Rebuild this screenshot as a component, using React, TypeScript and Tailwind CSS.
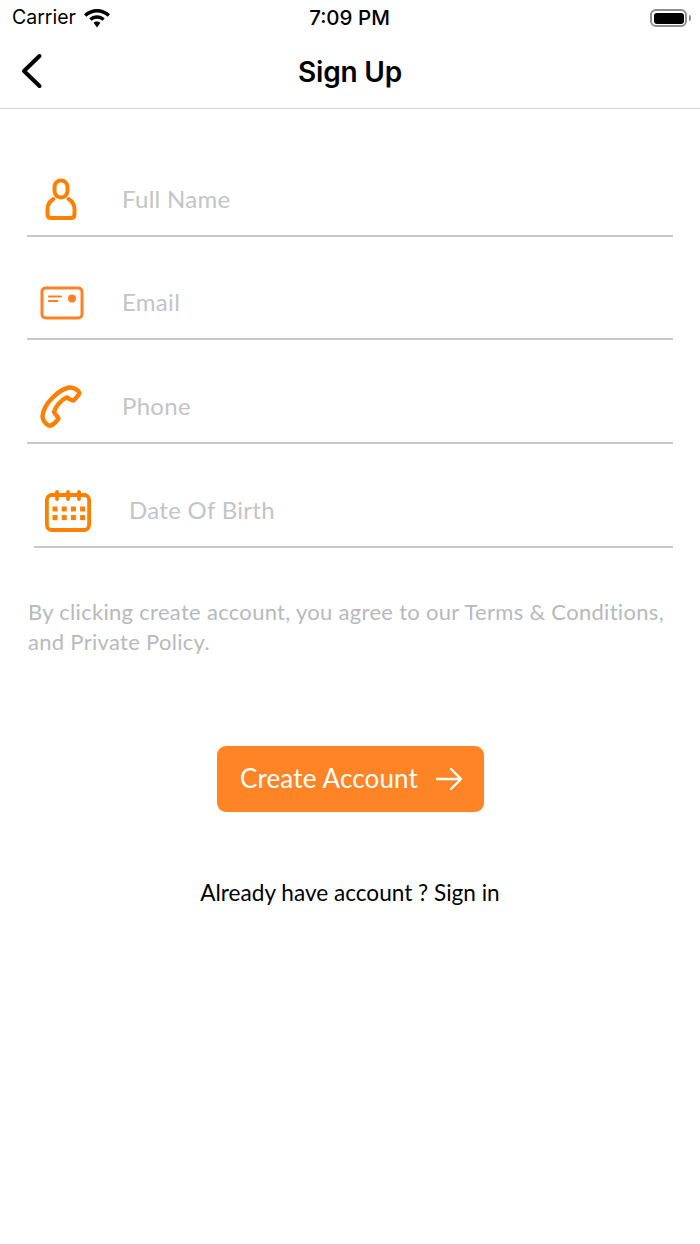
import type { ReactNode } from "react"

const sans = "font-['Lato','Noto_Sans',sans-serif]"

function UserIcon() {
  return (
    <svg width="32" height="44" viewBox="0 0 32 44" fill="none" stroke="#ff8000" strokeWidth="4" strokeLinecap="round" strokeLinejoin="round">
      <rect x="9.500" y="2.500" width="13" height="17" rx="6.500" />
      <path d="M8.500 21 C4.500 23.500 2.500 26 2.500 31 V36 C2.500 38.500 3.500 40 6 40 H26 C28.500 40 29.500 38.500 29.500 36 V31 C29.500 26 27.500 23.500 23.500 21" />
    </svg>
  )
}

function CardIcon() {
  return (
    <svg width="44" height="34" viewBox="0 0 44 34" fill="none" stroke="#ff8126" strokeWidth="3" strokeLinecap="round">
      <rect x="2" y="2" width="40" height="30" rx="3.500" />
      <path d="M9 10.500 H21 M9 15 H17.500" strokeWidth="2.200" />
      <circle cx="32" cy="12.500" r="4" fill="#ff8126" stroke="none" />
    </svg>
  )
}

function PhoneIcon() {
  return (
    <svg width="42" height="44" viewBox="0 0 42 44" fill="none" stroke="#ff8000" strokeWidth="4.400" strokeLinejoin="round">
      <path d="M8.500 40.500 C5.500 38.500 2.500 35 2.500 31 C3.500 19 18 5 29 2.500 C33 2 38 4.500 39.500 8 C39 10 36 13 33.500 15.500 C31 15.500 28.500 13 26.500 12.500 C21 15 15 22 14 27 C15 29.500 17.500 31 18.500 33.500 C16.500 36.500 12 41.500 8.500 40.500 Z" />
    </svg>
  )
}

function CalendarIcon() {
  const cells = [0, 1, 2, 3].flatMap((col) => [0, 1].map((row) => ({ col, row })))
  return (
    <svg width="46" height="42" viewBox="0 0 46 42" fill="none" stroke="#ff8000" strokeWidth="3.800" strokeLinecap="round">
      <rect x="1.900" y="5" width="42.200" height="35" rx="5" />
      <path d="M12 1.900 V9 M23 1.900 V9 M34 1.900 V9" />
      {cells.map(({ col, row }) => (
        <rect key={`${col}-${row}`} x={7.500 + col * 9.200} y={16.500 + row * 8.600} width="5" height="5" fill="#ff8000" stroke="none" />
      ))}
    </svg>
  )
}

function Field({ icon, label, className, labelClass }: { icon: ReactNode; label: string; className: string; labelClass: string }) {
  return (
    <div className={`flex h-[103.700px] items-end border-b-2 border-[#c8c8c8] ${className}`}>
      <div className="flex h-[70px] w-full items-center">
        {icon}
        <span className={`pb-[2px] text-[24px] tracking-[0.3px] text-[#c4c4c6] ${labelClass}`}>{label}</span>
      </div>
    </div>
  )
}

export default function App() {
  return (
    <div className={`h-[1244px] w-[700px] overflow-hidden bg-white text-black ${sans}`}>
      <div className="grid h-[36px] grid-cols-3 items-center pl-3 pr-[9px] font-['Inter',sans-serif]">
        <div className="flex items-center gap-[8px] text-[19.500px]">
          <span>Carrier</span>
          <svg width="26" height="19" viewBox="0 0 26 19" fill="#000">
            <path d="M13 0 C18 0 22.500 2 26 5.300 L23.700 7.800 C20.800 5.100 17 3.500 13 3.500 C9 3.500 5.200 5.100 2.300 7.800 L0 5.300 C3.500 2 8 0 13 0 Z" />
            <path d="M13 6.300 C15.900 6.300 18.600 7.400 20.700 9.400 L18.400 11.800 C17 10.500 15.100 9.700 13 9.700 C10.900 9.700 9 10.500 7.600 11.800 L5.300 9.400 C7.400 7.400 10.100 6.300 13 6.300 Z" />
            <path d="M13 12.500 C14.300 12.500 15.500 13 16.400 13.800 L13 18.500 L9.600 13.800 C10.500 13 11.700 12.500 13 12.500 Z" />
          </svg>
        </div>
        <span className="pr-[4px] text-center text-[20.500px] font-medium">7:09 PM</span>
        <div className="flex items-center justify-end gap-[1.500px]">
          <div className="h-[18px] w-[37px] rounded-[6px] border-2 border-[#8e8e8e] p-[1.500px]">
            <div className="h-full w-full rounded-[3px] bg-black" />
          </div>
          <div className="h-[6px] w-[2px] rounded-r-full bg-[#8e8e8e]" />
        </div>
      </div>

      <div className="relative flex h-[73px] items-center justify-center border-b border-[#d6d6d6] pb-[1px]">
        <svg className="absolute left-[20px] top-[17px]" width="24" height="36" viewBox="0 0 24 36" fill="none" stroke="#000" strokeWidth="4" strokeLinecap="round" strokeLinejoin="round">
          <path d="M19.500 3 L4 18 L19.500 33" />
        </svg>
        <span className="font-['Inter',sans-serif] text-[28px] font-semibold tracking-[-0.2px]">Sign Up</span>
      </div>

      <div className="mt-[24px] flex flex-col">
        <Field className="ml-[27px] mr-[27px]" labelClass="ml-[45px]" label="Full Name" icon={<div className="ml-[18px] h-[44px] w-[32px]"><UserIcon /></div>} />
        <Field className="ml-[27px] mr-[27px]" labelClass="ml-[38px]" label="Email" icon={<div className="ml-[13px] h-[34px] w-[44px]"><CardIcon /></div>} />
        <Field className="ml-[27px] mr-[27px]" labelClass="ml-[40px]" label="Phone" icon={<div className="ml-[13px] h-[44px] w-[42px]"><PhoneIcon /></div>} />
        <Field className="ml-[34px] mr-[27px]" labelClass="ml-[38px]" label="Date Of Birth" icon={<div className="ml-[11px] h-[42px] w-[46px]"><CalendarIcon /></div>} />
      </div>

      <p className="ml-[28px] mr-[20px] mt-[49px] max-w-[645px] text-[22px] leading-[30px] tracking-[0.3px] text-[#b9b9bb]">
        By clicking create account, you agree to our Terms &amp; Conditions, and Private Policy.
      </p>

      <div className="mt-[89px] flex justify-center">
        <button className="flex h-[66px] w-[267px] items-center justify-center gap-[17px] rounded-[9px] bg-[#ff8426] pl-[2px] text-[26px] tracking-[0.15px] text-white">
          <span className="pl-[1px]">Create Account</span>
          <svg width="28" height="24" viewBox="0 0 28 24" fill="none" stroke="#fff" strokeWidth="2.400" strokeLinecap="round" strokeLinejoin="round">
            <path d="M2 12 H26 M16 2 L26 12 L16 22" />
          </svg>
        </button>
      </div>

      <p className="mt-[66px] text-center text-[22.600px] leading-[30px]">Already have account ? Sign in</p>
    </div>
  )
}
